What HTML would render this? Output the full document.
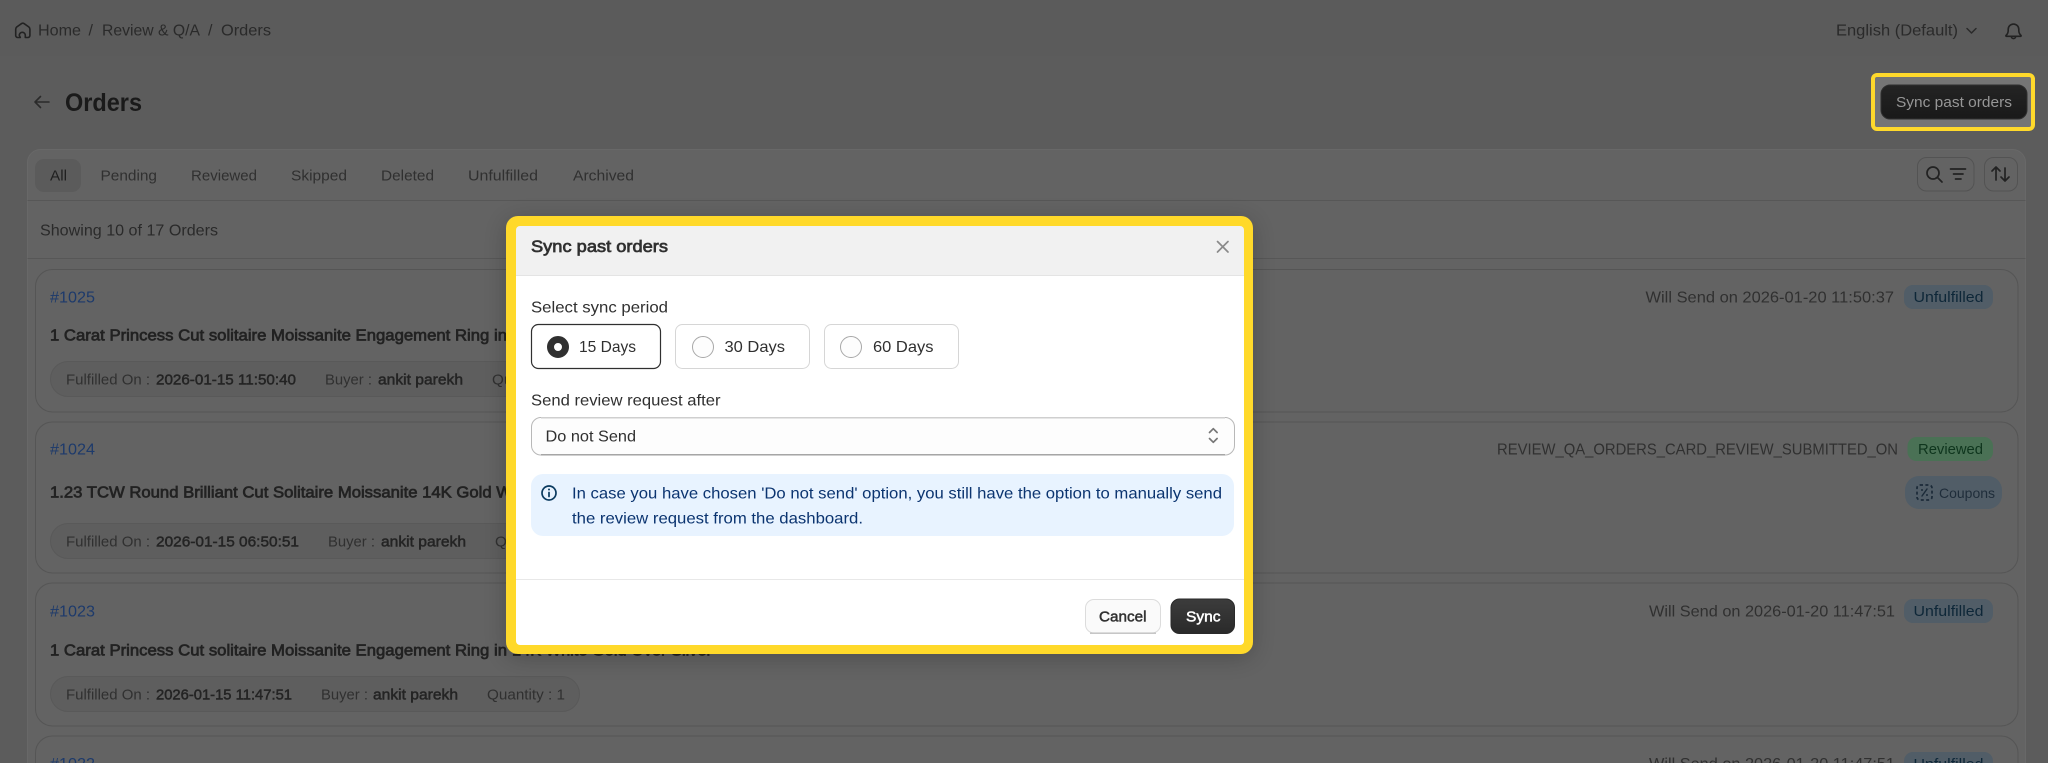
<!DOCTYPE html>
<html lang="en">
<head>
<meta charset="utf-8">
<title>Orders - Sync past orders</title>
<style>
html,body{margin:0;padding:0;width:2048px;height:763px;overflow:hidden;background:#5c5c5c}
svg{display:block;font-family:"Liberation Sans",Arial,sans-serif}
</style>
</head>
<body>
<svg xmlns="http://www.w3.org/2000/svg" width="2048" height="763" viewBox="0 0 2048 763">
<defs>
<filter id="sh" x="-10%" y="-15%" width="120%" height="130%"><feDropShadow dx="0" dy="4" stdDeviation="12" flood-color="#000" flood-opacity=".22"/></filter>
<linearGradient id="dk" x1="0" y1="0" x2="0" y2="1"><stop offset="0" stop-color="#3c3c3c"/><stop offset="1" stop-color="#2a2a2a"/></linearGradient>
<linearGradient id="dk2" x1="0" y1="0" x2="0" y2="1"><stop offset="0" stop-color="#242424"/><stop offset="1" stop-color="#191919"/></linearGradient>
</defs>

<!-- page -->
<rect width="2048" height="763" fill="#5c5c5c"/>
<rect width="2048" height="56" fill="#5b5b5b"/>

<!-- breadcrumb -->
<path d="M20.300 37.500h-2.600a2 2 0 0 1-2-2v-6.300c0-.9.4-1.600 1-2.200l4.700-3.300c.9-.6 1.900-.6 2.800 0l4.700 3.300c.7.6 1 1.300 1 2.200v6.300a2 2 0 0 1-2 2h-2.600v-2.200a3 3 0 0 0-6 0z" fill="none" stroke="#222" stroke-width="1.600" stroke-linejoin="round"/>
<g font-size="16" fill="#2a2a2a">
<text x="38" y="35.500" textLength="43" lengthAdjust="spacingAndGlyphs">Home</text>
<text x="88.500" y="35.500">/</text>
<text x="102" y="35.500" textLength="98" lengthAdjust="spacingAndGlyphs">Review &amp; Q/A</text>
<text x="208" y="35.500">/</text>
<text x="221" y="35.500" textLength="50" lengthAdjust="spacingAndGlyphs">Orders</text>
<text x="1836" y="35.500" textLength="122" lengthAdjust="spacingAndGlyphs">English (Default)</text>
</g>
<path d="M1967 28.500l4.500 4.500 4.500-4.500" fill="none" stroke="#2a2a2a" stroke-width="1.500" stroke-linecap="round" stroke-linejoin="round"/>
<path d="M2006 35.500c1.500-1.400 2.200-3 2.200-5v-1.200a5.300 5.300 0 0 1 10.600 0v1.200c0 2 .7 3.600 2.200 5 .3.3.1.8-.3.8h-14.400c-.4 0-.6-.5-.3-.8zM2011.300 36.500c.2 2.800 4.200 2.800 4.400 0" fill="none" stroke="#222" stroke-width="1.600" stroke-linejoin="round"/>

<!-- heading -->
<path d="M49 102H35m5.500-5.500L35 102l5.500 5.500" fill="none" stroke="#2a2a2a" stroke-width="1.600" stroke-linecap="round" stroke-linejoin="round"/>
<text x="65" y="111" font-size="25" font-weight="700" fill="#1a1a1a" textLength="77" lengthAdjust="spacingAndGlyphs">Orders</text>

<!-- top highlighted button -->
<rect x="1873" y="75" width="160" height="54" rx="4" fill="#757575" stroke="#ffd92b" stroke-width="4"/>
<rect x="1881" y="85" width="146" height="34" rx="9" fill="url(#dk2)" stroke="#303030"/>
<text x="1896" y="107" font-size="15" fill="#969696" textLength="116" lengthAdjust="spacingAndGlyphs">Sync past orders</text>

<!-- main card -->
<rect x="27.500" y="149.500" width="1998" height="640" rx="13" fill="#636363" stroke="#686868"/>
<rect x="35" y="159" width="46" height="33" rx="9" fill="#5b5b5b"/>
<g font-size="15" fill="#303030">
<text x="50" y="180.500" fill="#202020" textLength="17" lengthAdjust="spacingAndGlyphs">All</text>
<text x="100.500" y="180.500" textLength="56.500" lengthAdjust="spacingAndGlyphs">Pending</text>
<text x="191" y="180.500" textLength="66" lengthAdjust="spacingAndGlyphs">Reviewed</text>
<text x="291" y="180.500" textLength="56" lengthAdjust="spacingAndGlyphs">Skipped</text>
<text x="381" y="180.500" textLength="53" lengthAdjust="spacingAndGlyphs">Deleted</text>
<text x="468" y="180.500" textLength="70" lengthAdjust="spacingAndGlyphs">Unfulfilled</text>
<text x="573" y="180.500" textLength="61" lengthAdjust="spacingAndGlyphs">Archived</text>
</g>
<path d="M27.500 200.500H2025.500M27.500 258.500H2025.500" stroke="#575757"/>
<text x="40" y="235.500" font-size="16" fill="#2a2a2a" textLength="178" lengthAdjust="spacingAndGlyphs">Showing 10 of 17 Orders</text>

<!-- search/filter & sort -->
<rect x="1917.500" y="157.500" width="56.500" height="33.500" rx="9" fill="#636363" stroke="#535353"/>
<rect x="1984.500" y="157.500" width="33" height="33.500" rx="9" fill="#636363" stroke="#535353"/>
<circle cx="1933" cy="173" r="6" fill="none" stroke="#222" stroke-width="1.700"/>
<path d="M1937.500 177.500l4.500 4.500" stroke="#222" stroke-width="1.700" stroke-linecap="round"/>
<path d="M1950.500 169h15M1953.500 174h9.500M1955.500 179h5.500" stroke="#222" stroke-width="1.700" stroke-linecap="round"/>
<path d="M1996 180v-13m-4 4l4-4 4 4M2005 168v13m-4-4l4 4 4-4" fill="none" stroke="#222" stroke-width="1.700" stroke-linecap="round" stroke-linejoin="round"/>

<!-- order cards -->
<g fill="#636363" stroke="#555">
<rect x="35.500" y="269.500" width="1982.500" height="142.500" rx="17"/>
<rect x="35.500" y="422" width="1982.500" height="151" rx="17"/>
<rect x="35.500" y="583" width="1982.500" height="143" rx="17"/>
<rect x="35.500" y="736" width="1982.500" height="143" rx="17"/>
</g>
<g fill="#5e5e5e" stroke="#595959">
<rect x="50.500" y="361.500" width="600" height="35" rx="17.500"/>
<rect x="50.500" y="523.500" width="600" height="35" rx="17.500"/>
<rect x="50.500" y="676.500" width="529" height="35" rx="17.500"/>
</g>

<g font-size="16" fill="#1d3a6b">
<text x="50" y="302.500" textLength="45" lengthAdjust="spacingAndGlyphs">#1025</text>
<text x="50" y="454.500" textLength="45" lengthAdjust="spacingAndGlyphs">#1024</text>
<text x="50" y="616.500" textLength="45" lengthAdjust="spacingAndGlyphs">#1023</text>
<text x="50" y="769" textLength="45" lengthAdjust="spacingAndGlyphs">#1022</text>
</g>
<g font-size="16" fill="#222" stroke="#222" stroke-width=".7">
<text x="50" y="340.500" textLength="457" lengthAdjust="spacingAndGlyphs">1 Carat Princess Cut solitaire Moissanite Engagement Ring in</text>
<text x="50" y="497.500" textLength="462" lengthAdjust="spacingAndGlyphs">1.23 TCW Round Brilliant Cut Solitaire Moissanite 14K Gold W</text>
<text x="50" y="655.500" textLength="457" lengthAdjust="spacingAndGlyphs">1 Carat Princess Cut solitaire Moissanite Engagement Ring in</text>
<text x="512" y="655.500" textLength="200" lengthAdjust="spacingAndGlyphs">14K White Gold Over Silver</text>
</g>
<g font-size="15" fill="#303030">
<text x="66" y="384.500" textLength="84" lengthAdjust="spacingAndGlyphs">Fulfilled On :</text>
<text x="325" y="384.500" textLength="47" lengthAdjust="spacingAndGlyphs">Buyer :</text>
<text x="492" y="384.500" textLength="78" lengthAdjust="spacingAndGlyphs">Quantity : 1</text>
<text x="66" y="546.500" textLength="84" lengthAdjust="spacingAndGlyphs">Fulfilled On :</text>
<text x="328" y="546.500" textLength="47" lengthAdjust="spacingAndGlyphs">Buyer :</text>
<text x="495" y="546.500" textLength="78" lengthAdjust="spacingAndGlyphs">Quantity : 1</text>
<text x="66" y="699.500" textLength="84" lengthAdjust="spacingAndGlyphs">Fulfilled On :</text>
<text x="321" y="699.500" textLength="47" lengthAdjust="spacingAndGlyphs">Buyer :</text>
<text x="487" y="699.500" textLength="78" lengthAdjust="spacingAndGlyphs">Quantity : 1</text>
</g>
<g font-size="15" fill="#242424" stroke="#242424" stroke-width=".5">
<text x="156" y="384.500" textLength="140" lengthAdjust="spacingAndGlyphs">2026-01-15 11:50:40</text>
<text x="378" y="384.500" textLength="85" lengthAdjust="spacingAndGlyphs">ankit parekh</text>
<text x="156" y="546.500" textLength="143" lengthAdjust="spacingAndGlyphs">2026-01-15 06:50:51</text>
<text x="381" y="546.500" textLength="85" lengthAdjust="spacingAndGlyphs">ankit parekh</text>
<text x="156" y="699.500" textLength="136" lengthAdjust="spacingAndGlyphs">2026-01-15 11:47:51</text>
<text x="373" y="699.500" textLength="85" lengthAdjust="spacingAndGlyphs">ankit parekh</text>
</g>

<!-- right meta -->
<g font-size="16" fill="#303030">
<text x="1645.500" y="302.500" textLength="248.500" lengthAdjust="spacingAndGlyphs">Will Send on 2026-01-20 11:50:37</text>
<text x="1497" y="454.500" textLength="401" lengthAdjust="spacingAndGlyphs">REVIEW_QA_ORDERS_CARD_REVIEW_SUBMITTED_ON</text>
<text x="1649" y="616.500" textLength="246" lengthAdjust="spacingAndGlyphs">Will Send on 2026-01-20 11:47:51</text>
<text x="1649" y="769" textLength="246" lengthAdjust="spacingAndGlyphs">Will Send on 2026-01-20 11:47:51</text>
</g>
<g fill="#515d67">
<rect x="1904" y="285" width="89" height="24" rx="9"/>
<rect x="1904" y="599" width="89" height="24" rx="9"/>
<rect x="1904" y="752" width="89" height="24" rx="9"/>
</g>
<rect x="1907.500" y="437" width="85.500" height="24" rx="9" fill="#4a7155"/>
<g font-size="15" fill="#0e2738">
<text x="1913.500" y="302" textLength="70" lengthAdjust="spacingAndGlyphs">Unfulfilled</text>
<text x="1913.500" y="616" textLength="70" lengthAdjust="spacingAndGlyphs">Unfulfilled</text>
<text x="1913.500" y="769" textLength="70" lengthAdjust="spacingAndGlyphs">Unfulfilled</text>
<text x="1918" y="454" fill="#0e351d" textLength="65" lengthAdjust="spacingAndGlyphs">Reviewed</text>
</g>
<rect x="1905" y="476" width="97" height="33" rx="14" fill="#515d67"/>
<rect x="1917" y="485" width="15" height="15" rx="3" fill="none" stroke="#1b2a38" stroke-width="1.700" stroke-dasharray="3 2.400"/>
<path d="M1922 496l5-7" stroke="#1b2a38" stroke-width="1.400" stroke-linecap="round"/>
<circle cx="1922" cy="490" r="1" fill="#1b2a38"/><circle cx="1927" cy="495" r="1" fill="#1b2a38"/>
<text x="1939" y="498" font-size="14" fill="#1f2d3a" textLength="56" lengthAdjust="spacingAndGlyphs">Coupons</text>

<!-- modal -->
<rect x="506" y="216" width="747" height="438" rx="12" fill="#ffd92b" filter="url(#sh)"/>
<path d="M516 275V230a4 4 0 0 1 4-4H1240a4 4 0 0 1 4 4V275Z" fill="#f1f1f1"/>
<path d="M516 275H1244V641a4 4 0 0 1-4 4H520a4 4 0 0 1-4-4Z" fill="#fff"/>
<path d="M516 275.500H1244" stroke="#e4e4e4"/>
<text x="531" y="252" font-size="16.500" fill="#303030" stroke="#303030" stroke-width=".7" textLength="137" lengthAdjust="spacingAndGlyphs">Sync past orders</text>
<path d="M1217.500 241.500l10.500 10.500m0-10.500L1217.500 252" stroke="#8a8a8a" stroke-width="1.700" stroke-linecap="round"/>

<text x="531" y="312.500" font-size="16" fill="#303030" textLength="137" lengthAdjust="spacingAndGlyphs">Select sync period</text>

<rect x="531.500" y="324.500" width="129" height="44" rx="7" fill="#fff" stroke="#303030" stroke-width="1.200"/>
<circle cx="558" cy="347" r="7.500" fill="#fff" stroke="#303030" stroke-width="7"/>
<text x="579" y="352" font-size="16" fill="#303030" textLength="57" lengthAdjust="spacingAndGlyphs">15 Days</text>

<rect x="675.500" y="324.500" width="134" height="44" rx="7" fill="#fff" stroke="#d6d6d6"/>
<circle cx="703" cy="347" r="10.500" fill="#fdfdfd" stroke="#a8a8a8"/>
<text x="724.500" y="352" font-size="16" fill="#303030" textLength="60.500" lengthAdjust="spacingAndGlyphs">30 Days</text>

<rect x="824.500" y="324.500" width="134" height="44" rx="7" fill="#fff" stroke="#d6d6d6"/>
<circle cx="851" cy="347" r="10.500" fill="#fdfdfd" stroke="#a8a8a8"/>
<text x="873" y="352" font-size="16" fill="#303030" textLength="60.500" lengthAdjust="spacingAndGlyphs">60 Days</text>

<text x="531" y="405.500" font-size="16" fill="#303030" textLength="189.500" lengthAdjust="spacingAndGlyphs">Send review request after</text>

<rect x="531.500" y="417.500" width="703" height="37.500" rx="9.500" fill="#fdfdfd" stroke="#b8b8b8"/>
<path d="M541 417.800H1225" stroke="#cfcfcf" stroke-width="1.500"/>
<path d="M541 454.800H1225" stroke="#8a8a8a"/>
<text x="545.500" y="441.500" font-size="16" fill="#303030" textLength="90.500" lengthAdjust="spacingAndGlyphs">Do not Send</text>
<path d="M1209.500 432.500l3.800-3.800 3.800 3.800M1209.500 438.500l3.800 3.800 3.800-3.800" fill="none" stroke="#777" stroke-width="1.700" stroke-linecap="round" stroke-linejoin="round"/>

<rect x="531" y="474" width="703" height="62" rx="12" fill="#e8f3ff"/>
<circle cx="549" cy="493" r="7" fill="none" stroke="#0a3a5f" stroke-width="1.700"/>
<path d="M549 492.500v4" stroke="#0a3a5f" stroke-width="1.700" stroke-linecap="round"/>
<circle cx="549" cy="489.500" r="1" fill="#0a3a5f"/>
<g font-size="16" fill="#0b3470">
<text x="572" y="498.500" textLength="650" lengthAdjust="spacingAndGlyphs">In case you have chosen 'Do not send' option, you still have the option to manually send</text>
<text x="572" y="523.500" textLength="291" lengthAdjust="spacingAndGlyphs">the review request from the dashboard.</text>
</g>

<path d="M516 579.500H1244" stroke="#e8e8e8"/>
<rect x="1085.500" y="599.500" width="75" height="33.500" rx="8.500" fill="#fafafa" stroke="#dcdcdc"/>
<path d="M1090 633.200H1156" stroke="#b4b4b4" stroke-width="1.200"/>
<text x="1099" y="621.500" font-size="15" fill="#303030" stroke="#303030" stroke-width=".5" textLength="47.500" lengthAdjust="spacingAndGlyphs">Cancel</text>
<rect x="1171" y="599" width="63.500" height="34.500" rx="8.500" fill="url(#dk)" stroke="#2a2a2a"/>
<text x="1186" y="621.500" font-size="15" fill="#fff" stroke="#fff" stroke-width=".5" textLength="34.500" lengthAdjust="spacingAndGlyphs">Sync</text>
</svg>
</body>
</html>
